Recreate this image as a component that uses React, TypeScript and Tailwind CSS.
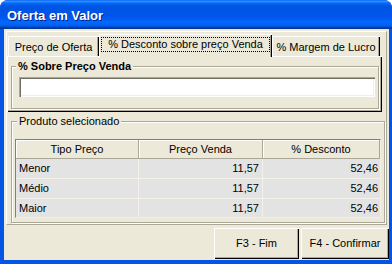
const raised =
  'shadow-[inset_1px_1px_0_#fff,inset_-1px_-1px_0_#000,inset_-2px_-2px_0_#aca899]';

function Tab({ label, selected, width }: { label: string; selected?: boolean; width: string }) {
  if (selected) {
    return (
      <div
        className={`relative z-10 -mb-[1px] flex h-[23px] flex-col bg-[#ece9d8] px-[2px] pt-[3px] pb-[5px] shadow-[inset_1px_1px_0_#fff,inset_-1px_0_0_#000,inset_-2px_0_0_#aca899] ${width}`}
      >
        <span className="flex flex-1 items-center justify-center border border-dotted border-black leading-[13px]">
          {label}
        </span>
      </div>
    );
  }
  return (
    <div
      className={`flex h-[20px] items-center justify-center bg-[#ece9d8] pt-[2px] leading-[13px] shadow-[inset_1px_1px_0_#fff,inset_-1px_0_0_#000,inset_-2px_0_0_#aca899] ${width}`}
    >
      {label}
    </div>
  );
}

const rows = [
  { tipo: 'Menor', venda: '11,57', desconto: '52,46' },
  { tipo: 'Médio', venda: '11,57', desconto: '52,46' },
  { tipo: 'Maior', venda: '11,57', desconto: '52,46' },
];

function Grid() {
  return (
    <div className="mt-[11px] ml-[3px] h-[79px] w-[366px] overflow-hidden border border-[#808080] border-r-[#f1efe2] border-b-[#f1efe2] bg-[#e3e3e3]">
      <div className="grid h-[19px] grid-cols-[123px_124px_1fr]">
        {['Tipo Preço', 'Preço Venda', '% Desconto'].map((h) => (
          <div
            key={h}
            className="flex items-center justify-center border-r border-b border-[#aca899] bg-[#ece9d8] leading-[13px] shadow-[inset_1px_1px_0_#fff]"
          >
            {h}
          </div>
        ))}
      </div>
      {rows.map((r) => (
        <div key={r.tipo} className="grid h-[20px] grid-cols-[123px_124px_1fr]">
          <div className="flex items-center border-r border-b border-[#f4f2e8] pl-[3px] leading-[13px]">
            {r.tipo}
          </div>
          <div className="flex items-center justify-end border-r border-b border-[#f4f2e8] pr-[3px] leading-[13px]">
            {r.venda}
          </div>
          <div className="flex items-center justify-end border-b border-[#f4f2e8] pr-[2px] leading-[13px]">
            {r.desconto}
          </div>
        </div>
      ))}
    </div>
  );
}

export default function App() {
  return (
    <div className="h-[264px] w-[392px] bg-white font-['Liberation_Sans',Arial,sans-serif] text-[11px] text-black">
      <div className="flex h-full flex-col overflow-hidden rounded-t-[8px] bg-[#0454e6]">
        <div className="flex h-[29px] shrink-0 items-center bg-[linear-gradient(to_bottom,#0058ee_0%,#3593ff_4%,#288eff_6%,#127dff_8%,#036ffc_10%,#0262ee_14%,#0057e5_20%,#0054e3_24%,#0055eb_56%,#005bf5_66%,#026afe_76%,#0062ef_86%,#0052d6_92%,#0040ab_94%,#003092_100%)] pl-[7px]">
          <span className="pt-[2px] text-[13px] font-bold text-white [text-shadow:1px_1px_0_#0a1e8c]">
            Oferta em Valor
          </span>
        </div>

        <div className="mr-[3px] mb-[4px] ml-[4px] flex flex-1 flex-col bg-[#ece9d8]">
          <div className="mt-[2px] ml-[2px] flex h-[194px] w-[381px] flex-col border border-white border-r-[#aca899] border-b-[#aca899]">
            <div className="mt-[2px] flex h-[22px] items-end pl-[1px]">
              <Tab label="Preço de Oferta" width="w-[91px]" />
              <Tab label="% Desconto sobre preço Venda" width="w-[173px]" selected />
              <Tab label="% Margem de Lucro" width="w-[108px]" />
            </div>

            <div className={`flex h-[56px] w-[375px] flex-col ${raised}`}>
              <div className="mt-[10px] ml-[4px] flex h-[43px] w-[368px] flex-col border border-[#aca899] shadow-[inset_1px_1px_0_#fff,1px_1px_0_#fff]">
                <span className="-mt-[7px] ml-[4px] self-start bg-[#ece9d8] px-[2px] leading-[13px] font-bold">
                  % Sobre Preço Venda
                </span>
                <div className="mt-[4px] ml-[7px] h-[20px] w-[356px] bg-white shadow-[inset_1px_1px_0_#aca899,inset_2px_2px_0_#716f64,inset_-1px_-1px_0_#fff,inset_-2px_-2px_0_#f1efe2]" />
              </div>
            </div>

            <div className="mt-[9px] ml-[4px] flex h-[102px] w-[374px] flex-col border border-[#aca899] shadow-[inset_1px_1px_0_#fff,1px_1px_0_#fff]">
              <span className="-mt-[7px] ml-[5px] self-start bg-[#ece9d8] px-[2px] leading-[13px]">
                Produto selecionado
              </span>
              <Grid />
            </div>
          </div>

          <div className="mt-[3px] flex h-[31px] justify-end gap-[2px]">
            <button className={`w-[85px] bg-[#ece9d8] leading-[13px] ${raised}`}>F3 - Fim</button>
            <button className={`w-[88px] bg-[#ece9d8] leading-[13px] ${raised}`}>F4 - Confirmar</button>
          </div>
        </div>
      </div>
    </div>
  );
}
